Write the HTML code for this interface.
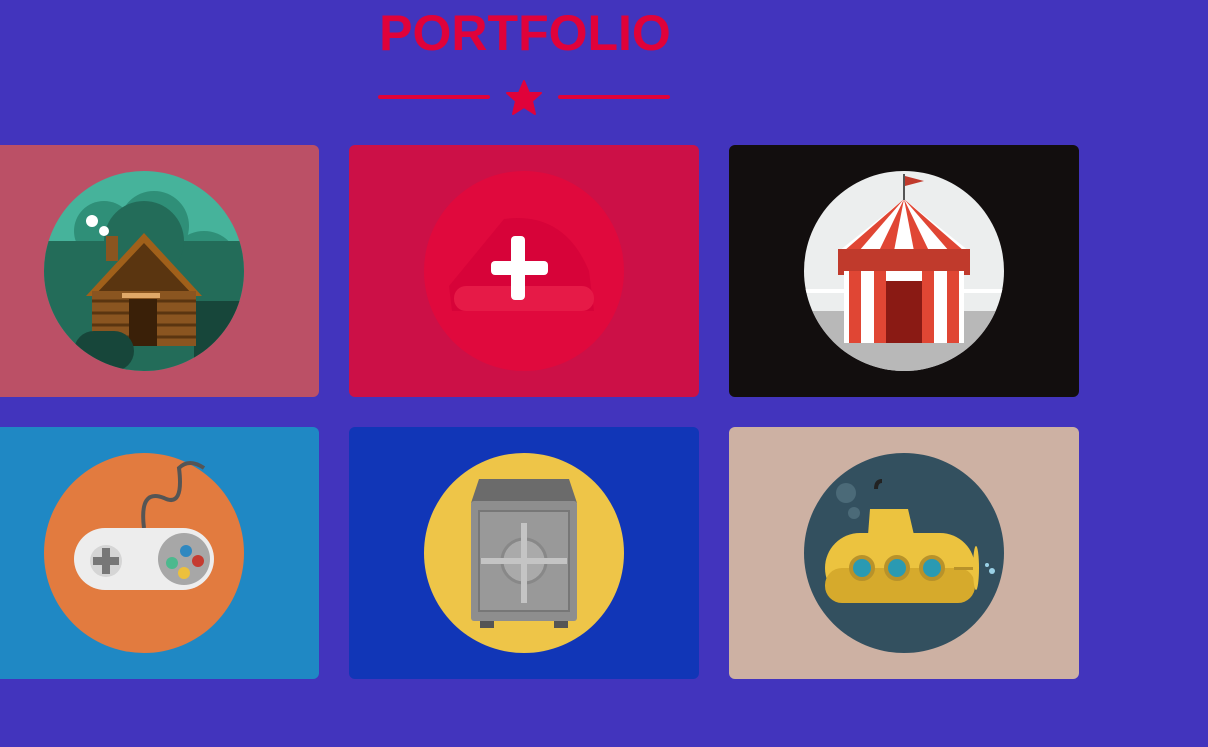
<!DOCTYPE html>
<html><head><meta charset="utf-8"><style>
html,body{margin:0;padding:0;width:1208px;height:747px;overflow:hidden;background:#4234bd;font-family:"Liberation Sans",sans-serif}
h1{position:absolute;left:376px;top:6px;margin:0;font-size:50px;font-weight:bold;color:#e0023a;letter-spacing:0px;width:298px;text-align:center;line-height:54px}
.ln{position:absolute;top:95px;height:4px;background:#e0023a;border-radius:2px}
.card{position:absolute;width:350px;height:252px;border-radius:6px;overflow:hidden}
.card svg{position:absolute;left:75px;top:26px}
</style></head><body>
<h1>PORTFOLIO</h1>
<div class="ln" style="left:378px;width:112px"></div>
<div class="ln" style="left:558px;width:112px"></div>
<svg style="position:absolute;left:505px;top:80px" width="38" height="36" viewBox="0 0 38 36"><polygon points="19,1 24,13 36,13 27,21 30,34 19,27 8,34 11,21 2,13 14,13" fill="#e0023a" stroke="#e0023a" stroke-width="2" stroke-linejoin="round"/></svg>

<div class="card" style="left:-31px;top:145px;background:#bb5066"><svg width="200" height="200" viewBox="0 0 200 200"><defs><clipPath id="c1"><circle cx="100" cy="100" r="100"/></clipPath></defs><g clip-path="url(#c1)"><rect width="200" height="200" fill="#46b39b"/><circle cx="60" cy="60" r="30" fill="#2f8f78"/><circle cx="110" cy="55" r="35" fill="#2f8f78"/><circle cx="160" cy="95" r="35" fill="#2f8f78"/><rect x="0" y="70" width="200" height="130" fill="#236c59"/><circle cx="100" cy="70" r="40" fill="#236c59"/><rect x="150" y="130" width="50" height="70" fill="#17463a"/><polygon points="100,62 42,125 158,125" fill="#a0601a"/><polygon points="100,72 50,125 150,125" fill="#5a3510"/><rect x="48" y="120" width="104" height="55" fill="#8a5520"/><g stroke="#5a3510" stroke-width="3"><line x1="48" y1="130" x2="152" y2="130"/><line x1="48" y1="142" x2="152" y2="142"/><line x1="48" y1="154" x2="152" y2="154"/><line x1="48" y1="166" x2="152" y2="166"/></g><rect x="85" y="128" width="28" height="47" fill="#3a2008"/><rect x="78" y="122" width="38" height="5" fill="#e0a868"/><rect x="62" y="65" width="12" height="25" fill="#8a5520"/><circle cx="48" cy="50" r="6" fill="#fff"/><circle cx="60" cy="60" r="5" fill="#fff"/><rect x="30" y="160" width="60" height="40" rx="20" fill="#17463a"/></g></svg></div>

<div class="card" style="left:349px;top:145px;background:#cc1047"><svg width="200" height="200" viewBox="0 0 200 200"><circle cx="100" cy="100" r="100" fill="#e0093d"/><path d="M25 115 L80 48 Q140 40 165 100 L170 140 L28 140 Z" fill="#d70339"/><rect x="30" y="115" width="140" height="25" rx="12" fill="#e61a47"/><rect x="87" y="65" width="14" height="64" rx="4" fill="#fff"/><rect x="67" y="90" width="57" height="14" rx="4" fill="#fff"/></svg></div>

<div class="card" style="left:729px;top:145px;background:#120e0e"><svg width="200" height="200" viewBox="0 0 200 200"><defs><clipPath id="c3"><circle cx="100" cy="100" r="100"/></clipPath></defs><g clip-path="url(#c3)"><rect width="200" height="200" fill="#eceeee"/><rect y="140" width="200" height="60" fill="#b8b8b8"/><rect y="118" width="200" height="4" fill="#fff"/><polygon points="100,28 35,80 165,80" fill="#fff"/><g fill="#e04634"><polygon points="100,28 40,80 55,80"/><polygon points="100,28 75,80 90,80"/><polygon points="100,28 110,80 125,80"/><polygon points="100,28 145,80 160,80"/></g><rect x="34" y="78" width="132" height="26" fill="#c03a2c"/><rect x="40" y="100" width="120" height="72" fill="#fff"/><g fill="#e04634"><rect x="45" y="100" width="12" height="72"/><rect x="70" y="100" width="12" height="72"/><rect x="118" y="100" width="12" height="72"/><rect x="143" y="100" width="12" height="72"/></g><rect x="82" y="110" width="36" height="62" fill="#8a1a14"/><rect x="99" y="3" width="2" height="26" fill="#555"/><polygon points="101,5 120,10 101,15" fill="#c03a2c"/></g></svg></div>

<div class="card" style="left:-31px;top:427px;background:#1f88c4"><svg width="200" height="200" viewBox="0 0 200 200"><circle cx="100" cy="100" r="100" fill="#e27b3f"/><path d="M100 75 Q95 35 120 45 Q140 55 135 15 Q145 5 160 15" stroke="#555" stroke-width="4" fill="none"/><rect x="30" y="75" width="140" height="62" rx="31" fill="#ededed"/><circle cx="140" cy="106" r="26" fill="#a7a7a7"/><circle cx="62" cy="108" r="16" fill="#d5d5d5"/><rect x="49" y="104" width="26" height="8" fill="#777"/><rect x="58" y="95" width="8" height="26" fill="#777"/><circle cx="128" cy="110" r="6" fill="#4cb98e"/><circle cx="142" cy="98" r="6" fill="#2f88c0"/><circle cx="154" cy="108" r="6" fill="#c53b30"/><circle cx="140" cy="120" r="6" fill="#ecc03d"/></svg></div>

<div class="card" style="left:349px;top:427px;background:#1136b7"><svg width="200" height="200" viewBox="0 0 200 200"><circle cx="100" cy="100" r="100" fill="#eec548"/><path d="M47 50 L55 26 L145 26 L153 50 Z" fill="#6b6b6b"/><rect x="47" y="48" width="106" height="120" rx="3" fill="#8e8e8e"/><rect x="55" y="58" width="90" height="100" fill="#999" stroke="#777" stroke-width="2"/><circle cx="100" cy="108" r="22" fill="#aaa" stroke="#888" stroke-width="3"/><rect x="97" y="70" width="6" height="80" fill="#c4c4c4"/><rect x="57" y="105" width="86" height="6" fill="#c4c4c4"/><rect x="56" y="168" width="14" height="7" fill="#555"/><rect x="130" y="168" width="14" height="7" fill="#555"/></svg></div>

<div class="card" style="left:729px;top:427px;background:#cdb1a3"><svg width="200" height="200" viewBox="0 0 200 200"><circle cx="100" cy="100" r="100" fill="#33505f"/><circle cx="42" cy="40" r="10" fill="#4b6a78"/><circle cx="50" cy="60" r="6" fill="#4b6a78"/><path d="M72 36 Q72 28 78 28" stroke="#222" stroke-width="4" fill="none"/><path d="M64 82 L66 56 L104 56 L110 82 Z" fill="#ecc33f"/><rect x="21" y="80" width="150" height="70" rx="35" fill="#ecc33f"/><rect x="21" y="115" width="150" height="35" rx="17" fill="#d6aa2c"/><g fill="#2a9ab2" stroke="#b8922a" stroke-width="4"><circle cx="58" cy="115" r="11"/><circle cx="93" cy="115" r="11"/><circle cx="128" cy="115" r="11"/></g><rect x="150" y="114" width="24" height="3" fill="#b8922a"/><ellipse cx="172" cy="115" rx="3" ry="22" fill="#ecc33f"/><circle cx="188" cy="118" r="3" fill="#9ad1e6"/><circle cx="183" cy="112" r="2" fill="#9ad1e6"/></svg></div>
</body></html>
